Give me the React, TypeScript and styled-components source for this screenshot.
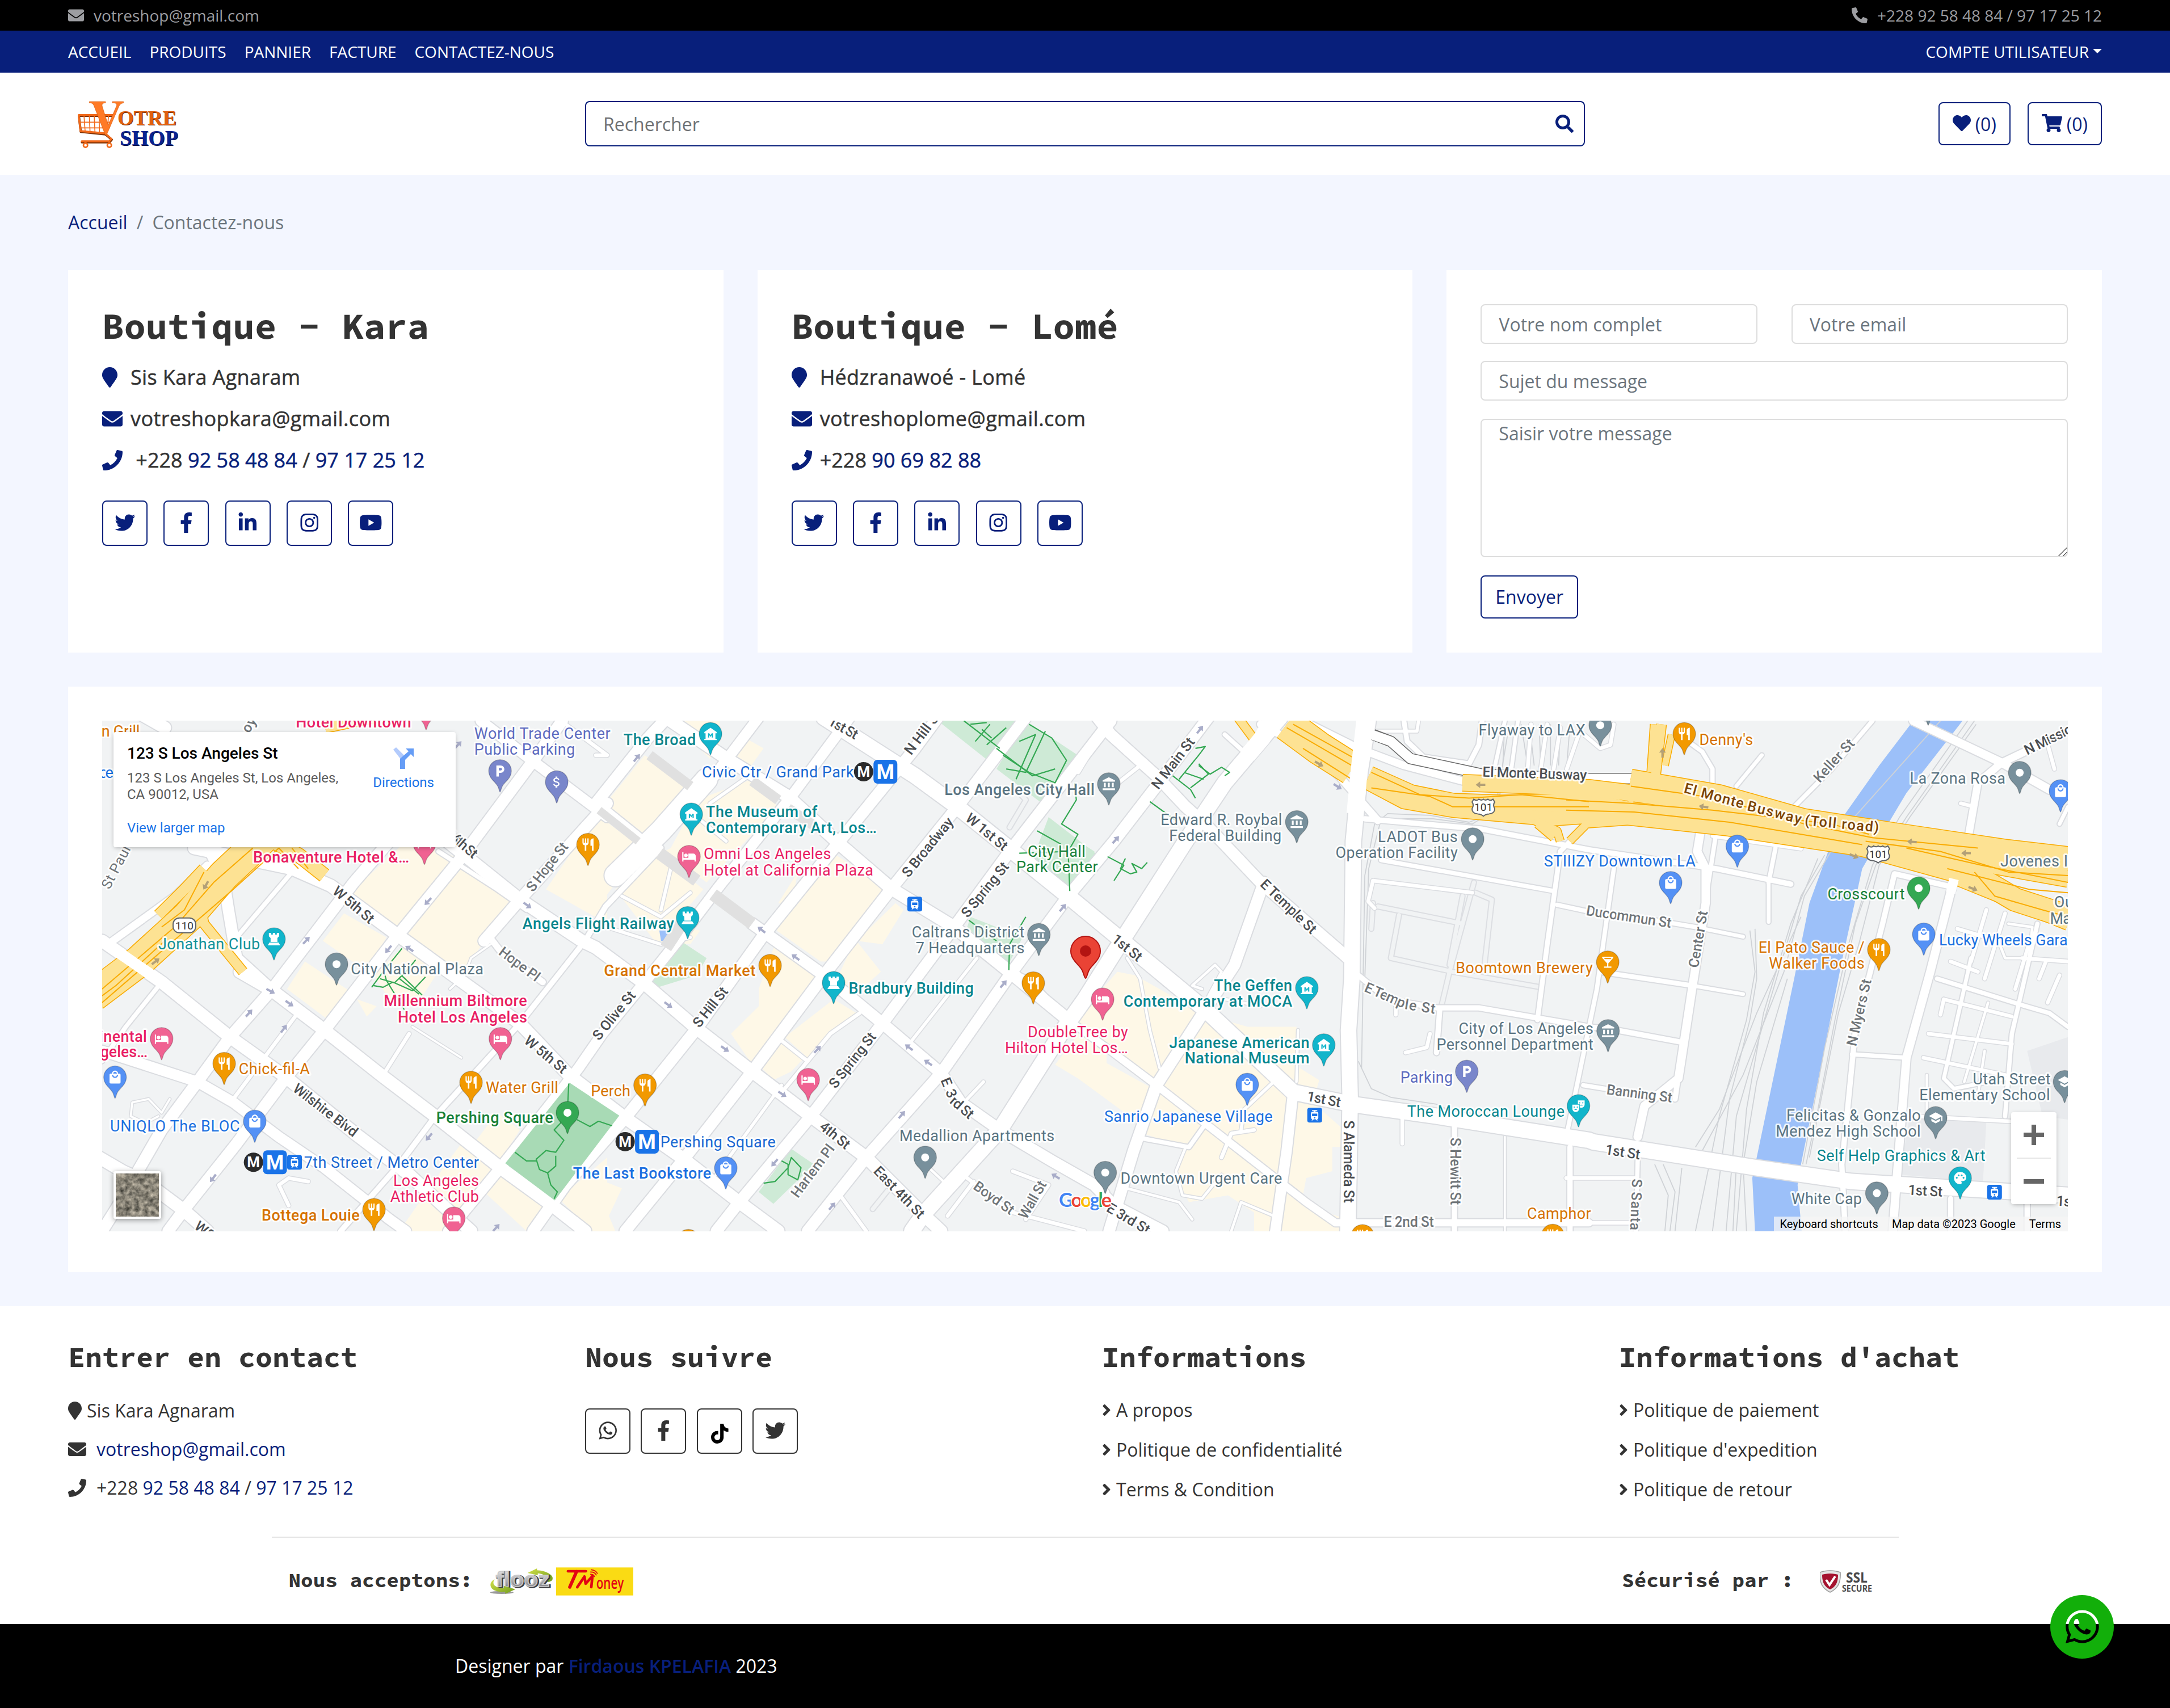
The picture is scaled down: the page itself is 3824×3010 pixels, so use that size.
import React from "react";
import styled, { createGlobalStyle, css } from "styled-components";
import {
  FaAngleRight,
  FaEnvelope,
  FaFacebookF,
  FaHeart,
  FaInstagram,
  FaLinkedinIn,
  FaMapMarker,
  FaPhone,
  FaPhoneAlt,
  FaSearch,
  FaShoppingCart,
  FaTiktok,
  FaTwitter,
  FaWhatsapp,
  FaYoutube,
} from "react-icons/fa";
import {
  MdAccountBalance,
  MdAttachMoney,
  MdHotel,
  MdLocalBar,
  MdLocalMall,
  MdLocalParking,
  MdMuseum,
  MdPalette,
  MdRestaurant,
  MdSchool,
  MdTheaterComedy,
  MdTram,
} from "react-icons/md";

const navy = "#081f7b";
const ink = "#333333";
const sans = `"Open Sans", "Noto Sans", sans-serif`;
const mono = `"Source Code Pro", "DejaVu Sans Mono", monospace`;
const roboto = `Roboto, "Liberation Sans", sans-serif`;

const GlobalStyle = createGlobalStyle`
  *, *::before, *::after { box-sizing: border-box; }
  body { margin: 0; background: #f3f6ff; color: ${ink}; font: 32px/48px ${sans}; }
  a { color: ${navy}; text-decoration: none; }
  svg { display: block; flex: none; }
`;

/* ---------- header ---------- */

const TopBar = styled.div`
  display: flex;
  justify-content: space-between;
  align-items: center;
  height: 54px;
  padding: 0 120px;
  background: #000;
  color: #9c9da1;
  font-size: 28px;
  line-height: 42px;
`;
const TopItem = styled.div`
  display: flex;
  align-items: center;
  gap: 17px;
`;
const NavBar = styled.nav`
  display: flex;
  align-items: center;
  gap: 32px;
  height: 74px;
  padding: 0 120px;
  background: ${navy};
  color: #fff;
  font-size: 28px;
  line-height: 42px;
`;
const NavLink = styled.span<{ $end?: boolean }>`
  display: flex;
  align-items: center;
  margin-left: ${(p) => (p.$end ? "auto" : "0")};
`;
const Caret = styled.i`
  margin: 0 0 2px 7px;
  border-top: 8.4px solid;
  border-left: 8.4px solid transparent;
  border-right: 8.4px solid transparent;
`;
const Header = styled.header`
  display: grid;
  grid-template-columns: repeat(4, 1fr);
  column-gap: 60px;
  align-items: center;
  height: 180px;
  padding: 0 120px;
  background: #fff;
`;
const LogoBox = styled.div`
  padding-left: 10px;
`;
const SearchBox = styled.div`
  grid-column: span 2;
  display: flex;
  justify-content: space-between;
  align-items: center;
  height: 80px;
  padding: 2px 18px 0 30px;
  border: 2px solid ${navy};
  border-radius: 8px;
  color: #6f7275;
  svg { margin-bottom: 2px; }
`;
const HeaderActions = styled.div`
  display: flex;
  justify-content: flex-end;
  gap: 30px;
`;
const CountButton = styled.button<{ $icon: number }>`
  display: flex;
  align-items: center;
  gap: 8px;
  height: 76px;
  padding: 2px 23px 0;
  border: 2px solid ${navy};
  border-radius: 8px;
  background: #fff;
  color: ${navy};
  font: 32px/48px ${sans};
  svg { width: ${(p) => p.$icon}px; margin-bottom: 4px; }
`;

/* ---------- content ---------- */

const Main = styled.main`
  display: flex;
  flex-direction: column;
  gap: 60px;
  padding: 60px 120px;
`;
const Crumbs = styled.div`
  display: flex;
  gap: 16px;
  color: #6c757d;
`;
const CardRow = styled.div`
  display: grid;
  grid-template-columns: repeat(3, 1fr);
  gap: 60px;
`;
const Card = styled.section`
  display: flex;
  flex-direction: column;
  gap: 30px;
  height: 674px;
  padding: 60px;
  background: #fff;
`;
const Title = styled.h2`
  height: 77px;
  margin: 0;
  font: 700 64px/77px ${mono};
  white-space: pre;
`;
const ContactLine = styled.div<{ $icon: number; $gap: number; $tracking?: number }>`
  display: flex;
  align-items: center;
  height: 43px;
  font-size: 36px;
  font-weight: 500;
  line-height: 43px;
  letter-spacing: ${(p) => p.$tracking ?? 0}px;
  -webkit-text-stroke: 0.5px;
  white-space: pre;
  svg {
    width: ${(p) => p.$icon}px;
    margin-right: ${(p) => p.$gap}px;
    color: ${navy};
  }
`;
const Socials = styled.div<{ $gap: number; $top: number }>`
  display: flex;
  gap: ${(p) => p.$gap}px;
  margin-top: ${(p) => p.$top}px;
`;
const SocialButton = styled.a<{ $dark?: boolean; $drop?: number }>`
  display: flex;
  align-items: center;
  justify-content: center;
  width: 80px;
  height: 80px;
  padding: ${(p) => p.$drop ?? 0}px 0 2px;
  border: 2px solid;
  border-radius: 8px;
  color: ${(p) => (p.$dark ? ink : navy)};
  svg { width: 40.5px; }
`;
const Form = styled.form`
  display: grid;
  grid-template-columns: 1fr 1fr;
  column-gap: 60px;
  row-gap: 30px;
`;
const field = css`
  border: 2px solid #dddddd;
  border-radius: 8px;
  background: #fff;
  font: 32px/48px ${sans};
  &::placeholder { color: #6c757d; opacity: 1; }
`;
const Field = styled.input<{ $wide?: boolean }>`
  ${field}
  grid-column: ${(p) => (p.$wide ? "1 / -1" : "auto")};
  width: 100%;
  height: 70px;
  padding: 1px 30px 0;
`;
const Message = styled.textarea`
  ${field}
  grid-column: 1 / -1;
  width: 100%;
  height: 244px;
  margin-top: 2px;
  padding: 0 30px;
  &::-webkit-resizer {
    background: linear-gradient(135deg, transparent 49%, #666 49% 54%, transparent 54% 76%, #666 76% 81%, transparent 81%);
  }
`;
const Submit = styled.button`
  justify-self: start;
  height: 76px;
  margin-top: 2px;
  padding: 0 24px;
  border: 2px solid ${navy};
  border-radius: 8px;
  background: #fff;
  color: ${navy};
  font: 32px/48px ${sans};
`;

/* ---------- map ---------- */

const MapCard = styled.section`
  height: 1032px;
  padding: 60px;
  background: #fff;
`;
const MapFrame = styled.div`
  position: relative;
  height: 900px;
  overflow: hidden;
  font-family: ${roboto};
`;
const InfoCard = styled.div`
  position: absolute;
  left: 20px;
  top: 20px;
  display: flex;
  justify-content: space-between;
  width: 603px;
  height: 203px;
  padding: 21px 38px 0 24px;
  border-radius: 4px;
  background: #fff;
  box-shadow: 0 2px 8px -2px rgba(0, 0, 0, 0.35);
  font-size: 24px;
  line-height: 29px;
  color: #5b5b5b;
`;
const InfoTitle = styled.div`
  margin-bottom: 12px;
  color: #000;
  font-size: 28px;
  font-weight: 500;
  line-height: 34px;
`;
const MapLink = styled.div<{ $top: number }>`
  margin-top: ${(p) => p.$top}px;
  color: #1a73e8;
`;
const Directions = styled.div`
  display: flex;
  flex-direction: column;
  align-items: center;
  padding-top: 6px;
`;
const ZoomControl = styled.div`
  position: absolute;
  right: 20px;
  bottom: 48px;
  display: flex;
  flex-direction: column;
  align-items: center;
  width: 80px;
  height: 162px;
  border-radius: 4px;
  background: #fff;
  box-shadow: 0 2px 8px -2px rgba(0, 0, 0, 0.35);
`;
const ZoomKey = styled.div`
  display: flex;
  flex: 1;
  align-items: center;
`;
const ZoomRule = styled.div`
  width: 60px;
  height: 2px;
  background: #e6e6e6;
`;
const Satellite = styled.div`
  position: absolute;
  left: 20px;
  bottom: 22px;
  border: 4px solid #fff;
  border-radius: 4px;
  box-shadow: 0 2px 10px rgba(0, 0, 0, 0.4);
`;
const Attribution = styled.div`
  position: absolute;
  right: 0;
  bottom: 0;
  display: flex;
  gap: 24px;
  padding: 0 12px 0 10px;
  background: rgba(245, 245, 245, 0.75);
  color: #000;
  font-size: 20px;
  line-height: 26px;
`;

/* ---------- footer ---------- */

const Footer = styled.footer`
  background: #fff;
`;
const FooterColumns = styled.div`
  display: grid;
  grid-template-columns: repeat(4, 1fr);
  column-gap: 60px;
  height: 406px;
  padding: 60px 120px 0;
`;
const FooterTitle = styled.h3`
  height: 60px;
  margin: 0 0 40px;
  font: 700 50px/60px ${mono};
  white-space: pre;
`;
const FooterLine = styled.div<{ $icon: number; $gap: number }>`
  display: flex;
  align-items: center;
  height: 48px;
  margin-bottom: 20px;
  white-space: pre;
  svg { width: ${(p) => p.$icon}px; margin-right: ${(p) => p.$gap}px; }
`;
const FooterLink = styled.div`
  display: flex;
  align-items: center;
  gap: 9px;
  height: 48px;
  margin: -1px 0 23px;
  svg { width: 16px; }
`;
const Payments = styled.div`
  display: flex;
  justify-content: space-between;
  align-items: center;
  width: 2867px;
  height: 154px;
  margin: 0 auto;
  padding: 1px 46px 0 30px;
  border-top: 2px solid #e5e5e5;
`;
const PayGroup = styled.div<{ $gap: number }>`
  display: flex;
  align-items: center;
  gap: ${(p) => p.$gap}px;
`;
const PayTitle = styled.h5`
  height: 43px;
  margin: 0 0 4px;
  font: 700 36px/43px ${mono};
  white-space: pre;
`;
const Copyright = styled.div`
  display: flex;
  align-items: center;
  height: 148px;
  padding-left: 802px;
  background: #000;
  color: #fff;
  white-space: pre;
`;
const AuthorLink = styled.a`
  font-weight: 600;
`;
const ChatButton = styled.a`
  position: fixed;
  right: 99px;
  bottom: 87px;
`;

/* ---------- map geometry ----------
   The map is surveyed in four sheets, a to d from west to east.
   A token such as "b120,840" is a point on sheet b. */

const sheets: Record<string, [number, number]> = {
  a: [-10, 0.574],
  b: [870, 0.574],
  c: [1720, 0.574],
  d: [2580, 0.5995],
};
const points = (s: string): [number, number][] =>
  [...s.matchAll(/([abcd])(-?\d+),(-?\d+)/g)].map((m) => {
    const [x0, k] = sheets[m[1]];
    return [x0 + Number(m[2]) * k, -30 + Number(m[3]) * 0.6059];
  });
const line = (s: string) =>
  "M" + points(s).map((p) => p[0].toFixed(1) + " " + p[1].toFixed(1)).join("L");

const shops = [
  "a780,550 a950,400 a1120,450 a970,640 a900,680", "a970,640 a1120,480 a1280,580 a1130,770 a1060,780 a940,690", "a760,610 a890,680 a830,780 a695,690",
  "a640,750 a800,850 a705,915 a585,830", "a850,790 a960,690 a1070,750 a980,880 a900,860", "a800,860 a860,880 a830,910", "a1380,540 a1545,315 a1568,330 a1568,640",
  "b230,50 b380,50 b380,130 b350,160", "b30,290 b150,150 b280,230 b150,380", "b0,320 b140,420 b0,600", "b420,140 b440,90 b515,130 b470,190",
  "b230,420 b310,280 b480,220 b560,300 b340,520 b210,430", "b60,540 b200,440 b330,540 b240,640 b320,660 b290,700 b180,690",
  "b555,660 b620,520 b720,430 b900,540 b730,750 b690,750", "b560,580 b620,490 b600,590", "b790,700 b920,580 b945,600 b880,700 b800,690 b875,780 b780,860 b740,800",
  "b415,960 b500,880 b500,830 b550,700 b690,800 b540,1040 b480,1050", "b580,970 b730,860 b800,900 b740,950 b650,1030", "b510,1060 b570,990 b640,1030 b600,1070 b545,1095",
  "b1410,1050 b1568,850 b1568,1150 b1480,1090", "c0,910 c120,780 c175,790 c380,900 c240,1110 c0,960",
  "c0,1000 c230,1120 c200,1230 c0,1090", "c410,910 c520,940 c670,940 c680,1060 c740,1095 c720,1160 c840,1260 c830,1290 c780,1290 c780,1360 c700,1380 c690,1430 c760,1480 c830,1500 c820,1534 c540,1534 c540,1480 c460,1430 c340,1450 c300,1380 c320,1290 c200,1250 c260,1090 c380,910",
  "a1150,1290 a1230,1190 a1300,1240 a1240,1330", "a1080,1330 a1120,1280 a1220,1350 a1100,1500 a1060,1534 a930,1534", "a1190,1420 a1240,1370 a1390,1460 a1320,1534", "a1420,1440 a1568,1320 a1568,1534 a1520,1534", "b0,1380 b80,1410 b40,1490 b60,1534 b0,1534",
];
const parks = [
  "b1050,50 b1290,50 b1210,170", "b1320,50 b1480,150 b1370,290 b1230,190", "b1390,330 b1540,440 b1460,560 b1330,480", "b1150,620 b1310,680 b1260,770 b1140,650",
  "b260,690 b340,740 b310,790 b190,825 b170,810", "b600,1295 b670,1340 b545,1455 b500,1420", "c0,400 c50,430 c0,500",
];
const streets: [number, string][] = [
  [26, "a80,0 a210,70 M"], [16, "a50,690 a240,560 a340,470"], [26, "a17,690 a200,810 a410,970 a580,1085 a800,1255 a960,1370 a1150,1534"],
  [26, "a300,420 a600,480 a720,530 a920,670 a1300,930 a1450,1080 b90,1205 b270,1325 b440,1450 b560,1534"],
  [26, "a440,780 a540,835 a700,950 a880,1085 a1040,1200 a1240,1350 a1400,1460 a1500,1534"],
  [22, "a17,1010 a310,1100 a420,1160 a560,1260 a700,1350 a900,1500 a950,1534"], [26, "a-10,1310 a80,1360 a150,1390 a270,1475 a340,1534"],
  [26, "a1050,380 a1300,570 a1490,690 b0,710 b150,815 b310,945 b480,1070 b660,1200 b830,1320 b1010,1490 b1060,1534"],
  [10, "a1050,430 a1230,540 a1320,600"], [22, "a1180,50 a1330,160 a1568,330 b0,290 b170,420"], [24, "b480,640 b700,790 b880,930 b1060,1075 b1120,1160 b1240,1240 b1400,1330 b1530,1400 c110,1460 c260,1534"],
  [26, "b230,50 b410,165 b590,270 b750,410 b910,540 b1100,650 b1270,780 b1450,920"], [16, "c-31,920 c100,1010 c240,1110 c470,1280 c700,1450 c790,1510 c1568,1510"],
  [32, "b700,40 b980,210 b1110,300 b1280,430 b1450,560 c180,725 c390,890 c660,1130 c840,1165 c1100,1200 c1568,1270 d80,1275 d560,1350 d840,1390 d1475,1430"],
  [24, "c50,30 c100,90 c240,210 c330,300 c400,360 c560,520 c840,750"], [12, "c860,790 c950,860 c1100,885 c1230,885 c1568,940 d150,950 d340,985"],
  [24, "a350,430 a390,510 a405,600 a430,740 a540,835"], [24, "a17,1534 a60,1470 a200,1240 a310,1100 a410,970 a540,830 a790,520 a900,400"],
  [10, "a200,810 a90,940 a17,1040"], [10, "a430,680 a600,490"], [24, "a220,1534 a270,1470 a430,1280 a580,1090 a700,950 a920,680 a1110,460 a1330,180 a1430,50"],
  [8, "a420,1150 a610,910"], [8, "a1440,60 a1568,150 b0,150"], [12, "a750,1534 a930,1340 a1040,1200 a1300,930 a1400,810 a1500,690 b30,590 b200,420"], [44, "b60,500 b200,370 b340,220"], [22, "b340,240 b500,40"],
  [24, "a1190,690 a1300,570 a1568,290 b0,290 b160,100 b220,40"], [14, "a1200,670 a1240,720 a1370,810"],
  [22, "a1080,1534 a1240,1350 a1480,1060 b20,960 b150,810 b260,680 b380,530 b600,270 b780,40"],
  [24, "a1340,1534 a1440,1400 b90,1205 b310,945 b510,680 b740,410 b980,130 b1050,40"], [24, "b90,1534 b270,1325 b480,1070 b700,790 b910,535 b1110,300 b1320,40"],
  [24, "b370,1534 b440,1450 b660,1200 b880,930 b1100,650 b1270,430 c100,50"], [24, "b650,1534 b830,1320 b1060,1075 b1270,790 b1450,560 c110,400 c240,240 c400,40"],
  [32, "b970,1534 b1010,1480 b1240,1240 c-40,940 c20,860 c120,710 c330,400 c450,230 c620,40"],
  [24, "c95,1534 c170,1300 c240,1110 c390,890 c480,760 c540,600 c570,520"], [32, "c890,50 c865,200 c845,400 c840,800 c830,950 c835,1150 c828,1534"],
  [22, "c660,1130 c640,1300 c605,1534"], [12, "c1155,1230 c1155,1534"], [5, "c1310,1260 c1310,1534"], [12, "c1510,1290 c1510,1534"], [8, "c995,1200 c995,1280"],
  [16, "c560,60 c700,130 c800,210 c920,340"], [16, "c690,50 c860,130 c1000,180 c1180,225"], [10, "c450,90 c520,150 c560,130"], [8, "c0,200 c90,60"], [8, "c190,180 c110,240"],
  [11, "c1000,50 c1010,110 c1060,155 c1200,175 c1230,120 c1240,50"], [7, "c900,80 c1040,80 c1045,50"], [9, "c1280,180 c1310,50"], [9, "c1330,190 c1350,50"],
  [8, "c1380,190 c1390,60"], [8, "c1420,190 c1440,60"], [8, "c1460,190 c1480,70"], [8, "c1500,190 c1540,80 d100,130 d130,120 d140,60"],
  [12, "c880,335 c1240,365 c1568,425 d440,480 d660,525"], [11, "c1510,400 c1480,430 c1440,700 c1410,920"], [10, "c1470,585 c1568,605 d200,620 d380,650"], [10, "d140,480 d90,830 d40,1070 d0,1260"],
  [18, "d395,370 d385,430 d410,480 d410,580 d370,830 d330,1090 d230,1170 d210,1260"], [12, "d330,1080 d320,1150"], [10, "d210,1330 d205,1534"], [10, "c930,455 c1460,545"], [10, "d440,380 d415,540"], [8, "d430,385 d690,422"],
  [10, "d615,420 d595,520"], [9, "d595,520 d595,635"], [11, "d100,780 d370,820"], [9, "d370,820 d520,845"], [9, "d380,650 d520,678"], [10, "d50,1110 d300,1150"], [8, "d0,1380 d200,1380"], [8, "d0,1510 d200,1510"],
  [8, "c905,515 c1210,550"], [8, "c905,515 c890,575 c910,595"], [18, "d1020,50 d1280,172 d1420,250"], [16, "d1475,80 d1280,172 d1210,230 d1180,400"], [18, "d1140,510 d1070,780 d1000,1030 d970,1400 d960,1534"],
  [12, "d1120,530 d965,495 d930,640 d850,950 d825,1200 d810,1340 d820,1534"], [10, "d840,1020 d1000,1030"], [10, "d900,50 d780,190 d650,320"], [9, "d575,150 d500,240"], [10, "d330,90 d400,140 d430,190 d430,240 d580,300"],
  [10, "d1090,800 d1350,880 d1420,900 d1475,940"], [10, "d1385,640 d1310,960 d1290,1200"], [8, "d1110,860 d1310,910"], [8, "d1065,960 d1310,990"], [8, "d1050,1030 d1290,1080"], [8, "d1150,655 d1270,690"], [8, "d1235,600 d1190,750"],
  [8, "d1290,610 d1230,800"], [8, "d1130,750 d1210,780"], [8, "d1110,860 d1100,905"], [9, "d1190,740 d1110,1090 d1140,1120 d1290,1090"], [6, "d1240,870 d1170,1100"], [8, "d1020,1200 d1310,1215"], [8, "d1340,740 d1475,750"], [8, "d1360,700 d1320,830"], [6, "d1300,640 d1370,650 d1360,740 d1290,740 d1270,690"],
  [8, "d1410,750 d1390,800"], [8, "d1450,790 d1415,870"], [6, "d1230,1010 d1210,1140"], [6, "d1060,1080 d1060,1200"], [8, "d1410,100 d1435,190"], [8, "d1160,290 d1200,300"], [9, "d1475,300 d1450,350"], [12, "d1130,1440 d1130,1534"], [12, "d1355,1430 d1355,1534"],
  [8, "b570,980 b650,1040 b720,960 b810,900"], [8, "b650,1040 b580,1120"], [7, "b970,980 b1170,740"], [7, "b1120,1170 b1190,1100"], [7, "b570,1110 b370,1370"], [12, "b1240,1240 b1568,1420"], [10, "b1270,780 b1330,800 b1450,920"],
  [8, "b1140,1380 b1280,1480 b1500,1534"], [8, "b1160,1390 b1080,1490"], [8, "b1280,1360 b1390,1400 b1320,1500"], [6, "b1000,1330 b1090,1410"], [8, "b750,1430 b830,1534"], [8, "a960,960 a880,1080"], [5, "a970,940 a1120,1030"], [5, "a1210,700 a1150,740 a1130,790 a1085,830"],
  [8, "a590,1460 a560,1400 a590,1380 a650,1390"], [5, "a190,1200 a150,1220 a105,1200 a110,1160 a160,1150 a200,1190 a225,1150"], [6, "c150,740 c190,800 c220,950 c250,1060"], [10, "c200,1265 c340,1290 c400,1210"], [7, "c600,1100 c510,1180 c500,1240"], [8, "c540,1240 c470,1250 c440,1320"],
  [6, "c330,1290 c300,1360 c320,1430 c380,1440 c440,1370"], [6, "c150,1410 c310,1450 c350,1500"], [6, "c470,1534 c500,1450 c600,1490"], [6, "c380,830 c350,820 c420,760 c440,780 c400,850 c560,880"], [7, "b80,560 b200,620 b290,550"], [7, "b230,480 b200,600"], [7, "b0,640 b200,700 b290,680"],
  [7, "b350,290 b470,210"], [7, "b310,330 b400,400"], [12, "c1110,890 c1100,1015"], [8, "c1080,960 c1070,1000 c1005,1015"], [8, "c975,870 c975,905"], [6, "c675,950 c670,1100"],
];
const yards = [
  "c905,580 c900,655", "c920,590 c1180,640", "c985,615 c960,740 c1150,780 c1420,825", "c1215,520 c1140,780 c1115,880", "c1220,550 c1270,570 c1245,780", "b1270,360 b1320,280 b1300,260", "b850,1470 b910,1400", "c1180,560 c1140,760",
];
const freeways: [number, string][] = [
  [54, "a-10,850 a130,750 a280,620 a390,500 a480,420 a620,290"], [18, "a190,615 a270,540 a330,480"], [16, "a310,550 a330,640 a450,780"], [24, "a540,400 a620,440 a700,500"], [30, "a700,60 a850,30"],
  [14, "c490,40 c545,110"], [56, "c640,60 c740,130 c840,190"], [40, "c890,215 c1020,270 c1150,295 c1300,300 c1568,295 d190,320 d470,350 d870,410 d1200,500 d1320,570 d1475,620"],
  [24, "c890,230 c1000,285 c1150,310 c1450,335 d180,320"], [28, "c1180,230 c1568,245 d190,260 d400,290 d700,340 d960,395 d1250,470 d1475,510"], [28, "d190,215 d450,260 d700,330 d960,370 d1300,420 d1475,440"], [40, "d1000,420 d1250,440 d1475,480"],
  [14, "d260,60 d250,200"], [16, "d280,60 d260,230 d180,280"], [11, "d310,90 d290,180"], [13, "d200,340 d60,350 d10,400"], [13, "c1400,340 c1470,370 c1480,400"], [13, "c1410,350 c1460,390"], [22, "d1150,510 d1300,570 d1400,610 d1475,640"],
];
const laneMarks = [
  "a17,830 a240,650 a360,520 a480,420", "a17,870 a200,720 a420,540 a560,420", "a17,850 a60,820 a210,690", "a330,490 a270,600 a200,650", "a560,420 a620,480", "a600,420 a650,480",
  "c640,70 c840,180", "c660,60 c840,155", "c690,130 c840,220", "c900,200 c1050,265 c1200,275 c1360,265 c1568,285", "c900,245 c1080,270 c1150,300 c1568,300", "d0,280 d190,290 d430,310 d780,350 d890,380", "d0,310 d200,315 d480,345 d870,410",
  "d190,240 d440,275 d700,350 d900,390 d1210,420", "d880,400 d1100,430 d1300,490 d1475,500", "d1000,420 d1220,470 d1475,520", "d1120,480 d1360,540 d1475,550", "d1200,490 d1260,560 d1400,600 d1475,620",
];
const rails = [
  "c860,1040 c900,1120 c960,1145 c1100,1165 c1200,1210 c1568,1280", "c870,1060 c880,500 c910,350 c950,320 c1080,325 c1200,345 c1270,320 c1300,250 c1310,50", "c880,800 c892,480 c930,335 c1090,335 c1210,350 c1280,310 c1320,80",
  "d0,1265 d560,1360 d840,1400 d1300,1430", "d0,1272 d560,1368 d840,1410 d1300,1438", "d540,660 d555,780 d530,920 d450,1200 d380,1534", "d555,655 d560,800 d540,920 d480,1150 d430,1534", "d1100,50 d820,360 d700,560 d640,780 d520,1080 d400,1300",
  "d760,440 d690,560 d600,860 d500,1200 d470,1534", "d740,450 d660,640 d580,900 d530,1180 d500,1534", "d650,800 d560,1100 d520,1340 d530,1534", "d690,620 d560,900 d450,1180 d380,1290", "d1200,50 d1000,330 d910,470 d850,640 d790,920 d740,1180 d705,1340", "d1180,50 d980,330 d900,470 d830,700 d760,1000 d695,1340",
  "d1205,60 d1010,330 d920,470 d860,700 d800,900 d715,1320", "d285,1340 d320,1420 d305,1534", "d260,1340 d300,1430 d290,1534", "d340,1350 d320,1534", "d500,1340 d490,1534", "c1380,180 c1360,60", "c1400,180 c1385,60", "c1420,180 c1415,60", "c1450,180 c1450,60", "c1475,180 c1480,60", "c1500,180 c1510,60",
];
const paths = [
  "a845,825 a880,780 a938,712", "a980,745 a955,775 a915,812 a870,800", "a880,770 a890,805 a945,890", "a925,780 a1000,848", "a850,820 a880,825 a910,810 a970,835 a1010,795", "a930,800 a990,845", "b1130,50 b1240,130 M", "b1210,60 b1165,110", "b1260,70 b1200,120", "b1150,60 b1200,55", "b1185,75 b1215,100", "b1330,60 b1400,100 b1445,165 b1410,230 b1330,200 b1250,150",
  "b1230,130 b1340,210 b1410,190", "b1380,80 b1320,200 b1260,190", "b1300,110 b1350,90 b1290,220", "b1470,230 b1475,280 b1430,350 b1480,380 b1450,430 b1455,545", "b1355,370 b1430,410", "b1300,435 b1450,430", "b1320,620 b1270,700 b1268,775", "b1145,630 b1230,690",
  "b515,1395 b550,1390 b590,1350 b600,1320 b630,1350 b620,1385 b590,1370 b590,1340 b570,1330", "c290,210 c345,250 c360,275", "c310,220 c370,150 c390,125 c360,130", "c345,245 c400,205 c370,175", "c325,200 c385,220", "c370,180 c405,205 c440,185 c465,200 c450,210", "c220,285 c300,340", "c90,445 c140,470 c110,515", "c145,450 c130,480 c160,495 c180,490 c165,465 c195,480 c212,462",
  "a1450,1105 a1445,1200 a1405,1240 a1435,1270 a1410,1305 a1380,1300 a1350,1325 a1360,1355 a1385,1365 a1410,1345 a1410,1315", "a1285,1305 a1320,1330 a1350,1330", "a1385,1365 a1395,1400 a1415,1420 a1405,1440", "a1475,1210 a1515,1230 a1540,1215 b10,1215 b50,1228",
];
const arrows = [
  "a1100,130 a1120,110", "a1028,565 a1008,585", "a1310,578 a1335,595", "a635,698 a653,680", "a905,704 a888,724", "a972,720 a950,706", "a522,830 a546,842", "a580,864 a604,880", "a458,911 a478,890", "a566,957 a584,935", "a1030,1250 a1012,1270", "a366,1370 a350,1390", "a1218,1534 a1236,1515", "b117,168 b134,148",
  "b520,666 b498,650", "b625,746 b602,730", "b210,868 b234,884", "b384,996 b408,1012", "b560,1128 b584,1143", "b670,1016 b690,996", "b930,1206 b948,1186", "b973,1008 b950,992", "b1032,1052 b1009,1037", "b1242,826 b1260,806", "b1424,604 b1442,584", "b716,1472 b734,1452", "b558,1325 b540,1345", "b1424,1382 b1400,1368", "c365,86 c382,66", "c106,406 c124,387", "c784,234 c808,248",
];
const freewayArrows = ["a342,518 a330,538", "a170,758 a192,742", "c726,168 c752,182", "c1250,236 c1222,236", "d283,156 d283,132", "d417,302 d392,298", "d833,438 d858,448", "d1030,403 d1004,401", "d1190,435 d1162,435", "d1182,533 d1208,543"];

type Side = [string, string, string, string, number?];
const teal = "#08868f";
const pink = "#e91e63";
const orange = "#d67200";
const blue = "#1a6fe0";
const slate = "#5a7482";
const violet = "#5c6bc0";
const green = "#188038";

/* [start of baseline, end of baseline, text, colour, weight] */
const places: Side[] = [
  ["a-62,96", "a133,96", "Main Grill", orange], ["a612,69", "a966,69", "Hotel Downtown", pink, 500], ["a-68,216", "a52,216", "Terrace", blue],
  ["a1160,102", "a1578,102", "World Trade Center", violet], ["a1160,148", "a1469,148", "Public Parking", violet], ["a481,462", "a960,462", "Bonaventure Hotel &…", pink, 500],
  ["a1308,655", "b240,655", "Angels Flight Railway", teal, 500], ["a190,715", "a502,715", "Jonathan Club", "#12929b"], ["a781,788", "a1188,788", "City National Plaza", slate],
  ["a882,880", "a1322,880", "Millennium Biltmore", pink, 500], ["a925,927", "a1322,927", "Hotel Los Angeles", pink, 500], ["a-186,983", "a155,983", "Intercontinental", pink, 500], ["a-132,1029", "a157,1029", "Los Angeles…", pink, 500],
  ["a437,1077", "a655,1077", "Chick-fil-A", orange], ["a1195,1133", "a1418,1133", "Water Grill", orange], ["a1518,1142", "b106,1142", "Perch", orange], ["a42,1245", "a440,1245", "UNIQLO The BLOC", blue],
  ["a1043,1220", "a1402,1220", "Pershing Square", green, 500], ["a637,1350", "a1174,1350", "7th Street / Metro Center", "#1967d2"], ["a911,1403", "a1174,1403", "Los Angeles", pink], ["a902,1449", "a1174,1449", "Athletic Club", pink],
  ["a507,1504", "a808,1504", "Bottega Louie", orange, 500], ["a1463,1382", "b354,1382", "The Last Bookstore", blue, 500],
  ["b85,120", "b307,120", "The Broad", teal, 500], ["b326,214", "b792,214", "Civic Ctr / Grand Park", "#1967d2"], ["b338,330", "b680,330", "The Museum of", teal, 500], ["b338,376", "b862,376", "Contemporary Art, Los…", teal, 500],
  ["b331,453", "b722,453", "Omni Los Angeles", pink], ["b331,500", "b852,500", "Hotel at California Plaza", pink], ["b25,793", "b490,793", "Grand Central Market", orange, 500], ["b776,843", "b1160,843", "Bradbury Building", teal, 500],
  ["b1070,265", "b1531,265", "Los Angeles City Hall", slate, 500], ["b1326,445", "b1503,445", "City Hall", green], ["b1291,491", "b1541,491", "Park Center", green], ["b970,680", "b1316,680", "Caltrans District", slate], ["b982,726", "b1316,726", "7 Headquarters", slate],
  ["b1326,970", "c153,970", "DoubleTree by", pink], ["b1256,1016", "c153,1016", "Hilton Hotel Los…", pink], ["b932,1272", "b1408,1272", "Medallion Apartments", slate], ["b198,1291", "b552,1291", "Pershing Square", "#1967d2"],
  ["c253,353", "c626,353", "Edward R. Roybal", slate], ["c279,399", "c624,399", "Federal Building", slate], ["c920,402", "c1165,402", "LADOT Bus", slate], ["c790,449", "c1165,449", "Operation Facility", slate], ["c1229,93", "c1557,93", "Flyaway to LAX", slate],
  ["c417,835", "c657,835", "The Geffen", teal, 500], ["c139,881", "c657,881", "Contemporary at MOCA", teal, 500], ["c279,1001", "c710,1001", "Japanese American", teal, 500], ["c327,1047", "c710,1047", "National Museum", teal, 500], ["c80,1217", "c597,1217", "Sanrio Japanese Village", blue],
  ["c130,1396", "c626,1396", "Downtown Urgent Care", slate], ["c1159,784", "d78,784", "Boomtown Brewery", orange], ["c1168,960", "d80,960", "City of Los Angeles", slate], ["c1100,1007", "d80,1007", "Personnel Department", slate], ["c989,1102", "c1150,1102", "Parking", violet],
  ["c1010,1201", "c1493,1201", "The Moroccan Lounge", teal], ["c1378,1499", "d73,1499", "Camphor", orange], ["c1430,474", "d380,474", "STIIIZY Downtown LA", blue],
  ["d391,120", "d549,120", "Denny's", orange], ["d1010,232", "d1291,232", "La Zona Rosa", slate], ["d768,569", "d995,569", "Crosscourt", green], ["d565,725", "d877,725", "El Pato Sauce /", orange], ["d596,771", "d877,771", "Walker Foods", orange], ["d1096,703", "d1523,703", "Lucky Wheels Garage", blue],
  ["d1276,474", "d1525,474", "Jovenes Inc", slate], ["d1434,592", "d1508,592", "Our", slate], ["d1422,640", "d1556,640", "Market", slate], ["d1195,1107", "d1424,1107", "Utah Street", slate], ["d1038,1154", "d1422,1154", "Elementary School", slate], ["d647,1213", "d1042,1213", "Felicitas & Gonzalo", slate],
  ["d616,1259", "d1042,1259", "Mendez High School", slate], ["d737,1331", "d1232,1331", "Self Help Graphics & Art", teal], ["d662,1456", "d869,1456", "White Cap", slate],
];
const dark = "#4b4e52";
const grey = "#6f7478";
const roadNames: Side[] = [
  ["a40,542", "a146,350", "St Paul Ave", grey], ["a722,550", "a838,642", "W 5th St", dark, 500], ["a1055,370", "a1155,452", "W 4th St", dark, 500], ["a1340,550", "a1450,417", "S Hope St", grey, 500], ["a1232,728", "a1348,810", "Hope Pl", grey, 500], ["a1310,985", "a1430,1078", "W 5th St", dark, 500],
  ["a600,1125", "a788,1262", "Wilshire Blvd", dark, 500], ["b10,982", "b124,850", "S Olive St", dark, 500], ["b318,945", "b408,838", "S Hill St", dark, 500], ["a298,1525", "a400,1600", "W 8th St", dark, 500], ["a468,88", "a500,40", "oyl", grey, 500],
  ["b710,60", "b795,105", "1st St", dark, 500], ["b968,152", "b1064,32", "N Hill St", dark, 500], ["b960,508", "b1100,345", "S Broadway", dark, 500], ["b1132,338", "b1250,430", "W 1st St", dark, 500], ["b1142,625", "b1270,475", "S Spring St", dark, 500], ["b736,1122", "b862,970", "S Spring St", dark, 500],
  ["b1058,1095", "b1082,1150", "E 3", dark, 500], ["b1084,1160", "b1145,1210", "rd St", dark, 500], ["b684,1235", "b766,1298", "4th St", dark, 500], ["b620,1440", "b735,1295", "Harlem Pl", grey, 500], ["b850,1362", "b992,1500", "East 4th St", dark, 500], ["b1156,1410", "b1272,1488", "Boyd St", grey, 500], ["b1322,1502", "b1385,1398", "Wall St", grey, 500],
  ["c246,252", "c360,112", "N Main St", dark, 500], ["c556,528", "c715,672", "E Temple St", dark, 500], ["c100,690", "c182,752", "1st St", dark, 500], ["c876,836", "c997,886", "E Temp", grey, 500], ["c1001,888", "c1094,902", "le St", grey, 500], ["c700,1155", "c803,1174", "1st St", dark, 500],
  ["c816,1212", "c816,1452", "S Alameda St", dark, 500], ["c1142,1262", "c1142,1458", "S Hewitt St", grey, 500], ["c938,1522", "c1092,1522", "E 2nd St", grey, 500], ["c84,1475", "c210,1545", "E 3rd St", dark, 500], ["c1241,212", "d60,222", "El Monte Busway", dark, 500],
  ["d745,232", "d850,118", "Keller St", grey, 500], ["d344,258", "d518,305", "El Monte", "#7a4100", 500], ["d530,310", "d688,350", "Busway", "#7a4100", 500], ["d700,353", "d918,374", "(Toll road)", "#7a4100", 500], ["d57,615", "d307,652", "Ducommun St", grey, 500], ["d388,770", "d416,605", "Center St", grey, 500], ["d852,998", "d897,805", "N Myers St", grey, 500],
  ["d117,1136", "d310,1160", "Banning St", grey, 500], ["d113,1310", "d215,1326", "1st St", dark, 500], ["d1004,1428", "d1105,1434", "1st St", dark, 500], ["d1440,1460", "d1541,1466", "1st St", dark, 500], ["d194,1382", "d186,1590", "S Santa Fe", grey, 500], ["d1355,150", "d1560,50", "N Mission Rd", dark, 500],
];

type Kind = "dot" | "food" | "bed" | "bag" | "museum" | "gov" | "park" | "money" | "fort" | "school" | "bar" | "mask" | "art";
const glyphs: Record<string, React.ComponentType<any>> = {
  food: MdRestaurant, bed: MdHotel, bag: MdLocalMall, museum: MdMuseum, gov: MdAccountBalance, park: MdLocalParking, money: MdAttachMoney, school: MdSchool, bar: MdLocalBar, mask: MdTheaterComedy, art: MdPalette,
};
const pinColours = { orange: "#f29900", teal: "#12b5cb", pink: "#f06292", blue: "#5491f5", slate: "#78909c", violet: "#7986cb", green: "#34a853" };
const pins: [string, keyof typeof pinColours, Kind][] = [
  ["a1239,196", "violet", "park"], ["a1413,228", "violet", "money"], ["a1509,410", "orange", "food"], ["a1007,407", "pink", "bed"], ["a1012,15", "pink", "bed"], ["a545,685", "teal", "fort"], ["a737,758", "slate", "dot"], ["a200,975", "pink", "bed"], ["a1240,975", "pink", "bed"], ["a392,1047", "orange", "food"],
  ["a57,1087", "blue", "bag"], ["a486,1215", "blue", "bag"], ["a1150,1102", "orange", "food"], ["a1446,1190", "green", "dot"], ["a852,1472", "orange", "food"], ["a1097,1497", "pink", "bed"],
  ["b352,88", "teal", "museum"], ["b293,322", "teal", "museum"], ["b286,445", "pink", "bed"], ["b282,623", "teal", "fort"], ["b535,762", "orange", "food"], ["b730,812", "teal", "fort"], ["b652,1094", "pink", "bed"], ["b151,1110", "orange", "food"], ["b399,1351", "blue", "bag"], ["b1360,672", "slate", "gov"], ["b1343,813", "orange", "food"], ["b1011,1320", "slate", "dot"], ["b284,1562", "orange", "food"],
  ["c94,234", "slate", "gov"], ["c75,860", "pink", "bed"], ["c83,1364", "slate", "dot"], ["c671,344", "slate", "gov"], ["c1211,394", "slate", "dot"], ["c702,827", "teal", "museum"], ["c754,993", "teal", "museum"], ["c519,1108", "blue", "bag"], ["c1193,1070", "violet", "park"], ["c1536,1170", "teal", "mask"], ["c873,1548", "orange", "food"], ["c1457,1547", "orange", "food"],
  ["d100,63", "slate", "dot"], ["d347,88", "orange", "food"], ["d503,415", "blue", "bag"], ["d307,521", "blue", "bag"], ["d122,752", "orange", "bar"], ["d123,952", "slate", "gov"], ["d1333,201", "slate", "dot"], ["d1453,254", "blue", "bag"], ["d1036,537", "green", "dot"], ["d1051,671", "blue", "bag"], ["d919,716", "orange", "food"], ["d1086,1205", "slate", "school"], ["d1465,1100", "slate", "school"], ["d1158,1380", "teal", "art"], ["d913,1424", "slate", "dot"], ["d1064,2", "slate", "dot"],
];

const MapText = ({ item, size }: { item: Side; size: number }) => {
  const [from, to, text, fill, weight = 400] = item;
  const [[x1, y1], [x2, y2]] = points(from + " " + to);
  return (
    <text
      transform={`translate(${x1} ${y1}) rotate(${(Math.atan2(y2 - y1, x2 - x1) * 180) / Math.PI})`}
      textLength={Math.hypot(x2 - x1, y2 - y1)}
      fontSize={size}
      fontWeight={weight}
      fill={fill}
      stroke="#fff"
      strokeOpacity={0.85}
      strokeWidth={6}
      strokeLinejoin="round"
      paintOrder="stroke"
    >
      {text}
    </text>
  );
};

const Pin = ({ at, colour, kind }: { at: string; colour: keyof typeof pinColours; kind: Kind }) => {
  const [[x, y]] = points(at);
  const Glyph = glyphs[kind];
  return (
    <g transform={`translate(${x} ${y})`}>
      <path d="M0 37C-1 37 -2 31 -4 27C-8 19 -20 13 -20 0A20 20 0 1 1 20 0C20 13 8 19 4 27C2 31 1 37 0 37Z" fill={pinColours[colour]} stroke="#000" strokeOpacity={0.2} strokeWidth={1.5} />
      {Glyph && <Glyph x={-13} y={-13} size={26} color="#fff" />}
      {kind === "dot" && <circle r={7} fill="#fff" />}
      {kind === "fort" && <path d="M-9 -11H-5V-8H-2V-11H2V-8H5V-11H9V-5L6 -2V5H-6V-2L-9 -5ZM-8 6H8L11 11H-11Z" fill="#fff" />}
    </g>
  );
};

const Arrow = ({ at, fill = "#a9adc9" }: { at: string; fill?: string }) => {
  const [[x1, y1], [x2, y2]] = points(at);
  return (
    <path
      transform={`translate(${(x1 + x2) / 2} ${(y1 + y2) / 2}) rotate(${(Math.atan2(y2 - y1, x2 - x1) * 180) / Math.PI})`}
      d="M-8 -2H1V-6L9 0L1 6V2H-8Z"
      fill={fill}
    />
  );
};

const Metro = ({ at, round, tram }: { at: string; round?: boolean; tram?: boolean }) => {
  const [[x, y]] = points(at);
  if (tram)
    return (
      <g transform={`translate(${x} ${y})`}>
        <rect x={-13} y={-13} width={26} height={26} rx={4} fill="#1a73e8" />
        <MdTram x={-11} y={-11} size={22} color="#fff" />
      </g>
    );
  return (
    <g transform={`translate(${x} ${y})`}>
      {round ? <circle r={17} fill="#2b2b2b" /> : <rect x={-21} y={-21} width={42} height={42} rx={7} fill="#1a73e8" />}
      <text y={round ? 9 : 13} textAnchor="middle" fontSize={round ? 26 : 36} fontWeight={700} fill="#fff">
        M
      </text>
    </g>
  );
};

const Shield = ({ at, text }: { at: string; text: string }) => {
  const [[x, y]] = points(at);
  return (
    <g transform={`translate(${x} ${y})`}>
      {text === "110" ? (
        <rect x={-20} y={-13} width={40} height={26} rx={11} fill="#fff" stroke="#5f6368" strokeWidth={2} />
      ) : (
        <path d="M-17 -14Q-12 -10 -8 -14Q-3 -11 0 -14Q3 -11 8 -14Q12 -10 17 -14L20 -9Q16 -4 20 3Q20 11 10 12Q4 12 0 16Q-4 12 -10 12Q-20 11 -20 3Q-16 -4 -20 -9Z" fill="#fff" stroke="#5f6368" strokeWidth={2} />
      )}
      <text y={7} textAnchor="middle" fontSize={19} fill="#333">
        {text}
      </text>
    </g>
  );
};

const CityMap = () => (
  <svg width="3464" height="900" viewBox="0 0 3464 900" fontFamily={roboto}>
    <rect width="3464" height="900" fill="#f1f3f4" />
    {shops.map((s, i) => <path key={i} d={line(s) + "Z"} fill="#fef8e7" />)}
    {parks.map((s, i) => <path key={i} d={line(s) + "Z"} fill="#ceead6" />)}
    <path d={line("d1010,1200 d1235,1215 d1225,1390 d980,1370") + "Z"} fill="#e8eaed" />
    <path d={line("d1355,1010 d1475,970 d1475,1210 d1400,1200") + "Z"} fill="#e8eaed" />
    <path d={line("b195,660 b225,650 b225,690 b200,690") + "Z"} fill="#9cc0f9" />
    <path d={line("d1020,50 d1165,50 d1000,260 d940,360 d870,480 d810,750 d760,1000 d690,1340 d680,1400 d692,1534 d555,1534 d547,1380 d560,1320 d670,800 d715,580 d770,430 d820,320 d920,180") + "Z"} fill="#9cc0f9" />
    <g fill="none" strokeLinejoin="round">
      {rails.map((s, i) => <path key={i} d={line(s)} stroke="#cfd2d6" strokeWidth={1.8} />)}
      {yards.map((s, i) => <path key={i} d={line(s)} stroke="#dcdee2" strokeWidth={11} strokeLinecap="round" />)}
      {yards.map((s, i) => <path key={i} d={line(s)} stroke="#f1f3f4" strokeWidth={7} strokeLinecap="round" />)}
      {streets.map(([w, s], i) => <path key={i} d={line(s)} stroke="#dadce0" strokeWidth={w < 9 ? w + 1.5 : w * 0.9 + 2.5} strokeLinecap="round" />)}
      {streets.map(([w, s], i) => <path key={i} d={line(s)} stroke="#fff" strokeWidth={w < 9 ? w - 1.5 : w * 0.9 - 1.5} strokeLinecap="round" />)}
      <path d={line("b195,435 b310,515")} stroke="#e0e0e0" strokeWidth={22} />
      <path d={line("b360,555 b480,640")} stroke="#e0e0e0" strokeWidth={22} />
      <path d={line("b165,150 b290,240")} stroke="#e0e0e0" strokeWidth={18} />
      <path d={line("b480,225 b560,280")} stroke="#e0e0e0" strokeWidth={18} />
      <path d={line("b590,305 b670,355")} stroke="#e0e0e0" strokeWidth={18} />
      <path d={line("b10,310 b130,400")} stroke="#e0e0e0" strokeWidth={14} />
      <path d={line("b215,710 b270,630")} stroke="#e0e0e0" strokeWidth={22} />
      <path d={line("c905,90 c960,110 c1020,160 c1240,205 c1568,218 d200,218")} stroke="#666" strokeWidth={20} />
      <path d={line("c895,88 c960,110 c1020,160 c1240,205 c1568,218 d200,218")} stroke="#fff" strokeWidth={17} />
      {freeways.map(([w, s], i) => <path key={i} d={line(s)} stroke="#f9ab00" strokeWidth={w + 3} />)}
      {freeways.map(([w, s], i) => <path key={i} d={line(s)} stroke="#fde293" strokeWidth={w} />)}
      {laneMarks.map((s, i) => <path key={i} d={line(s)} stroke="#f9ab00" strokeWidth={2} />)}
      <path d={line("a17,690 a200,810")} stroke="#fff" strokeWidth={20} />
      <path d={line("c600,40 c565,100 c520,150")} stroke="#fff" strokeWidth={30} />
      <path d={line("c880,50 c862,200 c850,320")} stroke="#fff" strokeWidth={30} />
      <path d={line("d1140,510 d1130,550")} stroke="#fff" strokeWidth={17} />
      <path d={line("a1453,1103 b72,1198 a1407,1445 a1255,1337") + "Z"} fill="#a8dab5" />
      {paths.map((s, i) => <path key={i} d={line(s)} stroke="#34a853" strokeWidth={2.2} />)}
    </g>
    {arrows.map((s) => <Arrow key={s} at={s} />)}
    {freewayArrows.map((s) => <Arrow key={s} at={s} fill="#b3a077" />)}
    {roadNames.map((t) => <MapText key={t[0]} item={t} size={25} />)}
    {places.map((t) => <MapText key={t[0]} item={t} size={27} />)}
    {pins.map(([at, colour, kind]) => <Pin key={at} at={at} colour={colour} kind={kind} />)}
    <Shield at="a270,645" text="110" />
    <Shield at="c1244,301" text="101" />
    <Shield at="d917,437" text="101" />
    <Metro at="a482,1334" round />
    <Metro at="a548,1334" />
    <Metro at="a608,1334" tram />
    <Metro at="b822,198" round />
    <Metro at="b889,198" />
    <Metro at="b90,1274" round />
    <Metro at="b157,1274" />
    <Metro at="b979,583" tram />
    <Metro at="c726,1197" tram />
    <Metro at="d1259,1421" tram />
    <g transform="translate(1733 406)">
      <path d="M0 48C-2 48 -3 40 -6 34C-11 24 -26 16 -26 0A26 26 0 1 1 26 0C26 16 11 24 6 34C3 40 2 48 0 48Z" fill="#ea4335" stroke="#b31412" strokeWidth={2} />
      <circle r={10} fill="#b31412" />
    </g>
    <text x={1686} y={857} textLength={93} fontSize={34} fontWeight={700} stroke="#fff" strokeWidth={4} paintOrder="stroke" fontFamily={`Lato, ${roboto}`}>
      <tspan fill="#4285f4">G</tspan>
      <tspan fill="#ea4335">o</tspan>
      <tspan fill="#fbbc04">o</tspan>
      <tspan fill="#4285f4">g</tspan>
      <tspan fill="#34a853">l</tspan>
      <tspan fill="#ea4335">e</tspan>
    </text>
  </svg>
);

/* ---------- logos ---------- */

const ShopLogo = () => (
  <svg width="200" height="105" viewBox="0 0 600 315" fontFamily={`"Liberation Serif", serif`} fontWeight={700}>
    <path d="M206 114H27L37 199L167 212L201 240L189 254H43" fill="none" stroke="#7c3204" strokeWidth={12} strokeLinejoin="round" strokeLinecap="round" />
    <g fill="none" stroke="#f26a1b" strokeLinejoin="round" strokeLinecap="round">
      <path d="M206 110H26L36 195L166 207L199 236L188 249H42" strokeWidth={10} />
      <path d="M54 112L60 196M82 112L86 198M108 112L112 200M134 112L136 202M184 112L178 180M30 148H196M34 178H190" strokeWidth={5} />
      <circle cx="62" cy="270" r="11" strokeWidth={8} />
      <circle cx="188" cy="270" r="11" strokeWidth={8} />
    </g>
    <path d="M82 39H168V46C150 47 148 54 151 66L182 164L226 62C230 50 222 46 204 46V39H263V46C250 48 243 55 238 66L174 214H166L107 62C102 50 96 46 82 46Z" fill="#ff7a26" stroke="#d35a0c" strokeWidth={2} />
    <text x="234" y="164" fontSize="108" textLength="312" lengthAdjust="spacingAndGlyphs" fill="#6e2c04">OTRE</text>
    <text x="231" y="162" fontSize="108" textLength="312" lengthAdjust="spacingAndGlyphs" fill="#e0600f">OTRE</text>
    <text x="246" y="273" fontSize="116" textLength="308" lengthAdjust="spacingAndGlyphs" fill="#050f45">SHOP</text>
    <text x="243" y="271" fontSize="116" textLength="308" lengthAdjust="spacingAndGlyphs" fill="#0a2391">SHOP</text>
  </svg>
);

const FloozLogo = () => (
  <svg width="118" height="52" viewBox="30 45 354 156" fontFamily={`"Liberation Sans", sans-serif`}>
    <defs>
      <linearGradient id="steel" x1="0" y1="0" x2="0" y2="1">
        <stop offset="0" stopColor="#f4f4f4" />
        <stop offset="0.6" stopColor="#a9a9ac" />
        <stop offset="1" stopColor="#6a6a6f" />
      </linearGradient>
      <linearGradient id="leaf" x1="0" y1="0" x2="1" y2="1">
        <stop offset="0" stopColor="#d3e04a" />
        <stop offset="1" stopColor="#6f9c1c" />
      </linearGradient>
    </defs>
    <ellipse cx="100" cy="181" rx="62" ry="8" fill="#555" opacity="0.6" />
    <path d="M236 78L286 54V64C335 66 376 90 368 112C364 122 352 126 340 126C358 104 330 84 290 80V90Z" fill="url(#leaf)" />
    <g fontWeight={700} fontSize="112">
      <text x="74" y="154" textLength="284" lengthAdjust="spacingAndGlyphs" fill="#3b3b3f" stroke="#3b3b3f" strokeWidth={9}>flooz</text>
      <text x="68" y="150" textLength="284" lengthAdjust="spacingAndGlyphs" fill="url(#steel)" stroke="#c9c9cb" strokeWidth={5}>flooz</text>
    </g>
    <path d="M62 112C34 124 30 158 66 172C84 179 102 180 118 178V188L172 164L110 146V158C70 158 42 140 62 112Z" fill="url(#leaf)" />
  </svg>
);

const TMoneyLogo = () => (
  <svg width="136" height="50" viewBox="390 52 408 148" fontFamily={`"Open Sans", sans-serif`}>
    <rect x="390" y="52" width="408" height="148" fill="#fadb14" />
    <g fill="none" stroke="#e30613" strokeLinecap="round" strokeLinejoin="round">
      <path d="M452 72H548" strokeWidth={13} />
      <path d="M498 74L462 156" strokeWidth={17} />
      <path d="M502 156L540 100L546 138L582 98L576 156" strokeWidth={14} />
      <path d="M572 88A18 14 0 0 1 592 100M572 76A30 24 0 0 1 602 92M576 64A40 32 0 0 1 608 84" strokeWidth={5} />
    </g>
    <text x="602" y="164" fontSize="84" fontWeight={600} textLength="146" lengthAdjust="spacingAndGlyphs" fill="#e30613">oney</text>
  </svg>
);

const SslLogo = () => (
  <svg width="93" height="40" viewBox="0 0 93 40" fontFamily={`"Open Sans", sans-serif`} fontWeight={700} fill="#4a4a4c">
    <path d="M18 1C25 1 31 2 36 4C37 20 33 32 18 39C3 32 -1 20 0 4C5 2 11 1 18 1Z" fill="#e4e4e4" stroke="#9a9a9a" strokeWidth={1.5} />
    <path d="M18 6C24 6 28 7 32 8C32 20 29 29 18 34C7 29 4 20 4 8C8 7 12 6 18 6Z" fill="#a5122f" />
    <path d="M11 17L17 26L27 11" fill="none" stroke="#fff" strokeWidth={4} />
    <text x="46" y="22" fontSize="25" textLength="38" lengthAdjust="spacingAndGlyphs">SSL</text>
    <text x="39" y="38" fontSize="15.5" textLength="53" lengthAdjust="spacingAndGlyphs">SECURE</text>
  </svg>
);

const bubble =
  "M380.9 97.1C339 55.1 283.2 32 223.9 32c-122.4 0-222 99.6-222 222 0 39.1 10.2 77.3 29.6 111L0 480l117.7-30.9c32.4 17.7 68.9 27 106.1 27h.1c122.3 0 224.1-99.6 224.1-222 0-59.3-25.2-115-67.1-157zm-157 341.6c-33.2 0-65.7-8.9-94-25.7l-6.7-4-69.8 18.3L72 359.2l-4.4-7c-18.5-29.4-28.2-63.3-28.2-98.2 0-101.7 82.8-184.5 184.6-184.5 49.3 0 95.6 19.2 130.4 54.1 34.8 34.9 56.2 81.2 56.1 130.5 0 101.8-84.9 184.6-186.6 184.6zm101.2-138.2c-5.5-2.8-32.8-16.2-37.9-18-5.1-1.9-8.8-2.8-12.5 2.8-3.7 5.6-14.3 18-17.6 21.8-3.2 3.7-6.5 4.2-12 1.4-32.6-16.3-54-29.1-75.5-66-5.7-9.8 5.7-9.1 16.3-30.3 1.8-3.7.9-6.9-.5-9.7-1.4-2.8-12.5-30.1-17.1-41.2-4.5-10.8-9.1-9.3-12.5-9.5-3.2-.2-6.9-.2-10.6-.2-3.7 0-9.7 1.4-14.8 6.9-5.1 5.6-19.4 19-19.4 46.3 0 27.3 19.9 53.7 22.6 57.4 2.8 3.7 39.1 59.7 94.8 83.8 35.2 15.2 49 16.5 66.6 13.9 10.7-1.6 32.8-13.4 37.4-26.4 4.6-13 4.6-24.1 3.2-26.4-1.3-2.5-5-3.9-10.5-6.6z";

/* The bubble is punched out of the disc, so the page shows through it. */
const ChatIcon = () => (
  <svg width="112" height="112" viewBox="0 0 112 112">
    <mask id="punch">
      <rect width="112" height="112" fill="#fff" />
      <path d={bubble} transform="translate(27 22.2) scale(0.131)" fill="#000" />
    </mask>
    <circle cx="56" cy="56" r="56" fill="#12af0a" mask="url(#punch)" />
  </svg>
);

/* ---------- page ---------- */

const shopSocials = [FaTwitter, FaFacebookF, FaLinkedinIn, FaInstagram, FaYoutube];

const ShopCard = ({ name, place, mail, children }: { name: string; place: string; mail: string; children: React.ReactNode }) => (
  <Card>
    <Title>{name}</Title>
    <ContactLine $icon={27} $gap={23} $tracking={0.35}><FaMapMarker size={36} />{place}</ContactLine>
    <ContactLine $icon={36} $gap={14} $tracking={0.4}><FaEnvelope size={36} />{mail}</ContactLine>
    <ContactLine $icon={36} $gap={14}><FaPhone size={36} />{children}</ContactLine>
    <Socials $gap={28.3} $top={20}>
      {shopSocials.map((Icon, i) => <SocialButton key={i} href="#"><Icon size={36} /></SocialButton>)}
    </Socials>
  </Card>
);

export default function App() {
  return (
    <>
      <GlobalStyle />
      <TopBar>
        <TopItem><FaEnvelope size={28} />votreshop@gmail.com</TopItem>
        <TopItem><FaPhoneAlt size={28} />+228 92 58 48 84 / 97 17 25 12</TopItem>
      </TopBar>
      <NavBar>
        {["ACCUEIL", "PRODUITS", "PANNIER", "FACTURE", "CONTACTEZ-NOUS"].map((t) => <NavLink key={t}>{t}</NavLink>)}
        <NavLink $end>COMPTE UTILISATEUR<Caret /></NavLink>
      </NavBar>
      <Header>
        <LogoBox><ShopLogo /></LogoBox>
        <SearchBox>Rechercher<FaSearch size={32} color={navy} /></SearchBox>
        <HeaderActions>
          <CountButton $icon={32}><FaHeart size={32} />(0)</CountButton>
          <CountButton $icon={36}><FaShoppingCart size={32} />(0)</CountButton>
        </HeaderActions>
      </Header>

      <Main>
        <Crumbs><a href="#">Accueil</a><span>/</span><span>Contactez-nous</span></Crumbs>
        <CardRow>
          <ShopCard name="Boutique - Kara" place="Sis Kara Agnaram" mail="votreshopkara@gmail.com">
            {" +228 "}<a href="#">92 58 48 84</a>{" / "}<a href="#">97 17 25 12</a>
          </ShopCard>
          <ShopCard name="Boutique - Lomé" place="Hédzranawoé - Lomé" mail="votreshoplome@gmail.com">
            {"+228 "}<a href="#">90 69 82 88</a>
          </ShopCard>
          <Card>
            <Form>
              <Field placeholder="Votre nom complet" />
              <Field placeholder="Votre email" />
              <Field $wide placeholder="Sujet du message" />
              <Message placeholder="Saisir votre message" />
              <Submit type="button">Envoyer</Submit>
            </Form>
          </Card>
        </CardRow>
        <MapCard>
          <MapFrame>
            <CityMap />
            <InfoCard>
              <div>
                <InfoTitle>123 S Los Angeles St</InfoTitle>
                <div>123 S Los Angeles St, Los Angeles,<br />CA 90012, USA</div>
                <MapLink $top={30}>View larger map</MapLink>
              </div>
              <Directions>
                <svg width="38" height="38" viewBox="0 0 38 38">
                  <path d="M1 4L6 0L21 15L15 22Z" fill="#b3cbfc" />
                  <path d="M23 2H37V17L32 12L22 22V38H13V20L28 7Z" fill="#669df6" />
                </svg>
                <MapLink $top={10}>Directions</MapLink>
              </Directions>
            </InfoCard>
            <Satellite>
              <svg width="76" height="76" viewBox="0 0 76 76">
                <filter id="ground" x="0" y="0" width="1" height="1" colorInterpolationFilters="sRGB">
                  <feTurbulence type="fractalNoise" baseFrequency="0.12" numOctaves={4} seed={8} />
                  <feColorMatrix values="0.7 0.15 0 0 0.11  0.66 0.15 0 0 0.11  0.6 0.15 0 0 0.09  0 0 0 0 1" />
                </filter>
                <rect width="76" height="76" filter="url(#ground)" />
              </svg>
            </Satellite>
            <ZoomControl>
              <ZoomKey><svg width="36" height="36"><path d="M0 14H14V0H22V14H36V22H22V36H14V22H0Z" fill="#666" /></svg></ZoomKey>
              <ZoomRule />
              <ZoomKey><svg width="36" height="8"><rect width="36" height="8" fill="#666" /></svg></ZoomKey>
            </ZoomControl>
            <Attribution><span>Keyboard shortcuts</span><span>Map data ©2023 Google</span><span>Terms</span></Attribution>
          </MapFrame>
        </MapCard>
      </Main>

      <Footer>
        <FooterColumns>
          <div>
            <FooterTitle>Entrer en contact</FooterTitle>
            <FooterLine $icon={24} $gap={9}><FaMapMarker size={32} />Sis Kara Agnaram</FooterLine>
            <FooterLine $icon={32} $gap={18}><FaEnvelope size={32} /><a href="#">votreshop@gmail.com</a></FooterLine>
            <FooterLine $icon={32} $gap={18}><FaPhone size={32} />{"+228 "}<a href="#">92 58 48 84</a>{" / "}<a href="#">97 17 25 12</a></FooterLine>
          </div>
          <div>
            <FooterTitle>Nous suivre</FooterTitle>
            <Socials $gap={18.4} $top={60}>
              <SocialButton $dark href="#"><FaWhatsapp size={36} /></SocialButton>
              <SocialButton $dark href="#"><FaFacebookF size={36} /></SocialButton>
              <SocialButton $dark $drop={10} href="#"><FaTiktok size={35} color="#000" /></SocialButton>
              <SocialButton $dark href="#"><FaTwitter size={36} /></SocialButton>
            </Socials>
          </div>
          <div>
            <FooterTitle>Informations</FooterTitle>
            {["A propos", "Politique de confidentialité", "Terms & Condition"].map((t) => (
              <FooterLink key={t}><FaAngleRight size={32} />{t}</FooterLink>
            ))}
          </div>
          <div>
            <FooterTitle>Informations d'achat</FooterTitle>
            {["Politique de paiement", "Politique d'expedition", "Politique de retour"].map((t) => (
              <FooterLink key={t}><FaAngleRight size={32} />{t}</FooterLink>
            ))}
          </div>
        </FooterColumns>
        <Payments>
          <PayGroup $gap={28}>
            <PayTitle>Nous acceptons:</PayTitle>
            <PayGroup $gap={1}><FloozLogo /><TMoneyLogo /></PayGroup>
          </PayGroup>
          <PayGroup $gap={46}>
            <PayTitle>Sécurisé par :</PayTitle>
            <SslLogo />
          </PayGroup>
        </Payments>
        <Copyright>Designer par <AuthorLink href="#">Firdaous KPELAFIA</AuthorLink> 2023</Copyright>
      </Footer>
      <ChatButton href="#"><ChatIcon /></ChatButton>
    </>
  );
}
